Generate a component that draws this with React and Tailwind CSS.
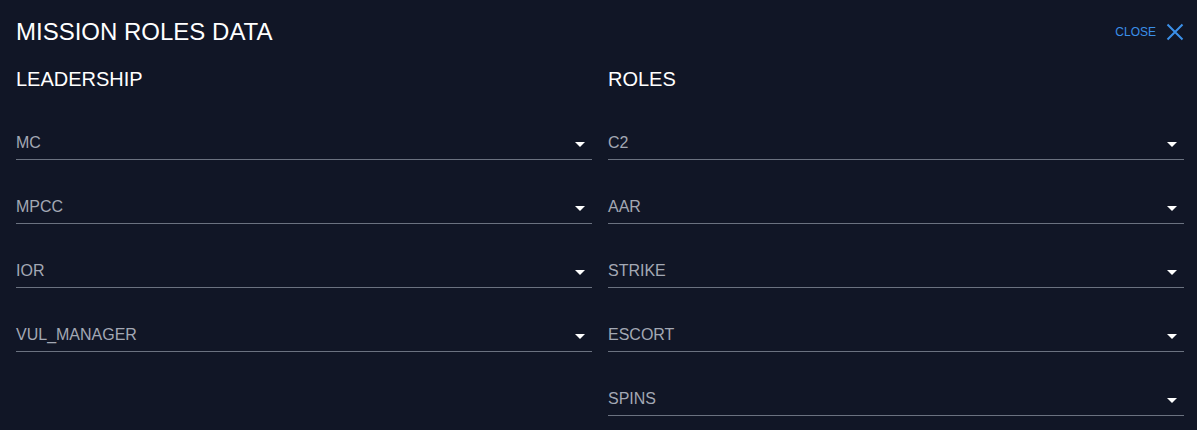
export default function App() {
  const leadership = ["MC", "MPCC", "IOR", "VUL_MANAGER"];
  const roles = ["C2", "AAR", "STRIKE", "ESCORT", "SPINS"];

  const Field = ({ label }) => (
    <div className="relative flex h-16 items-end border-b border-[#6b7280] pb-2">
      <span className="text-[16px] leading-4 text-[#a3a8b4]">{label}</span>
      <svg className="absolute right-[7px] bottom-[12px]" width="10" height="5" viewBox="0 0 10 5">
        <path d="M0 0 L10 0 L5 5 Z" fill="#ffffff" />
      </svg>
    </div>
  );

  return (
    <div
      className="min-h-[430px] w-full bg-[#111626] pl-4 pr-[13px] pt-4 text-white"
      style={{ fontFamily: '"Liberation Sans", Arial, sans-serif' }}
    >
      <div className="flex h-8 items-center justify-between">
        <h1 className="text-[24px] leading-8 text-white">MISSION ROLES DATA</h1>
        <button className="flex items-center gap-[10px] text-[12px] text-[#3b8fe8]">
          CLOSE
          <svg width="18" height="18" viewBox="0 0 18 18">
            <path d="M1.5 1.5 L16.5 16.5 M16.5 1.5 L1.5 16.5" stroke="#3b8fe8" strokeWidth="2" />
          </svg>
        </button>
      </div>
      <div className="grid grid-cols-2 gap-4">
        <div>
          <h2 className="h-12 pt-[21px] text-[20px] leading-5">LEADERSHIP</h2>
          {leadership.map((l) => (
            <Field key={l} label={l} />
          ))}
        </div>
        <div>
          <h2 className="h-12 pt-[21px] text-[20px] leading-5">ROLES</h2>
          {roles.map((l) => (
            <Field key={l} label={l} />
          ))}
        </div>
      </div>
    </div>
  );
}
